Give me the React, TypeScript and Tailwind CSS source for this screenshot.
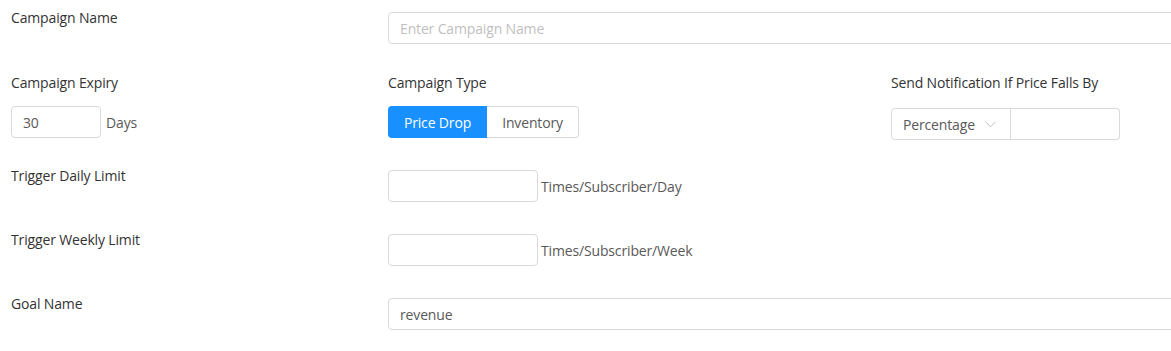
import React from "react";

const font = { fontFamily: '"Open Sans", "Noto Sans", sans-serif' };

function Label({ children }: { children: React.ReactNode }) {
  return <div className="text-[14px] leading-[22px] text-[#333333] tracking-[-0.15px]">{children}</div>;
}

export default function App() {
  return (
    <div className="w-[1171px] h-[351px] overflow-hidden bg-white text-[14px] tracking-[-0.15px]" style={font}>
      <div className="pt-[12px]">
        {/* Row 1 */}
        <div className="flex items-start">
          <div className="w-[388px] pl-[11px] -mt-[5px] shrink-0">
            <Label>Campaign Name</Label>
          </div>
          <div className="w-[800px] h-[32px] shrink-0 border border-[#d9d9d9] rounded-[4px] flex items-center px-[11px] text-[#bfbfbf]">
            Enter Campaign Name
          </div>
        </div>

        {/* Row 2 */}
        <div className="flex items-start mt-[28px] h-[66px]">
          <div className="w-[388px] pl-[11px] shrink-0">
            <Label>Campaign Expiry</Label>
            <div className="mt-[12px] flex items-center">
              <div className="w-[90px] h-[32px] border border-[#d9d9d9] rounded-[4px] flex items-center px-[11px] text-[#595959]">
                30
              </div>
              <span className="ml-[5px] text-[#595959]">Days</span>
            </div>
          </div>
          <div className="w-[503px] shrink-0">
            <Label>Campaign Type</Label>
            <div className="mt-[12px] flex">
              <div className="w-[99px] h-[32px] bg-[#1890ff] text-white rounded-l-[4px] flex items-center justify-center">
                Price Drop
              </div>
              <div className="w-[92px] h-[32px] border border-l-0 border-[#d9d9d9] rounded-r-[4px] text-[#595959] flex items-center justify-center">
                Inventory
              </div>
            </div>
          </div>
          <div className="shrink-0">
            <Label>Send Notification If Price Falls By</Label>
            <div className="mt-[14px] flex">
              <div className="w-[120px] h-[32px] border border-[#d9d9d9] rounded-l-[4px] flex items-center justify-between pl-[11px] pr-[14px] text-[#595959]">
                <span>Percentage</span>
                <svg width="11" height="7" viewBox="0 0 11 7" fill="none">
                  <polyline points="0.5,0.8 5.5,5.8 10.5,0.8" stroke="#bfbfbf" strokeWidth="1" />
                </svg>
              </div>
              <div className="w-[109px] h-[32px] border border-l-0 border-[#d9d9d9] rounded-r-[4px]" />
            </div>
          </div>
        </div>

        {/* Row 3 */}
        <div className="flex items-start mt-[32px]">
          <div className="w-[388px] pl-[11px] -mt-[5px] shrink-0">
            <Label>Trigger Daily Limit</Label>
          </div>
          <div className="flex items-center">
            <div className="w-[150px] h-[32px] border border-[#d9d9d9] rounded-[4px]" />
            <span className="ml-[3px] text-[#595959]">Times/Subscriber/Day</span>
          </div>
        </div>

        {/* Row 4 */}
        <div className="flex items-start mt-[32px]">
          <div className="w-[388px] pl-[11px] -mt-[5px] shrink-0">
            <Label>Trigger Weekly Limit</Label>
          </div>
          <div className="flex items-center">
            <div className="w-[150px] h-[32px] border border-[#d9d9d9] rounded-[4px]" />
            <span className="ml-[3px] text-[#595959]">Times/Subscriber/Week</span>
          </div>
        </div>

        {/* Row 5 */}
        <div className="flex items-start mt-[32px]">
          <div className="w-[388px] pl-[11px] -mt-[5px] shrink-0">
            <Label>Goal Name</Label>
          </div>
          <div className="w-[800px] h-[32px] shrink-0 border border-[#d9d9d9] rounded-[4px] flex items-center px-[11px] text-[#595959]">
            revenue
          </div>
        </div>
      </div>
    </div>
  );
}
